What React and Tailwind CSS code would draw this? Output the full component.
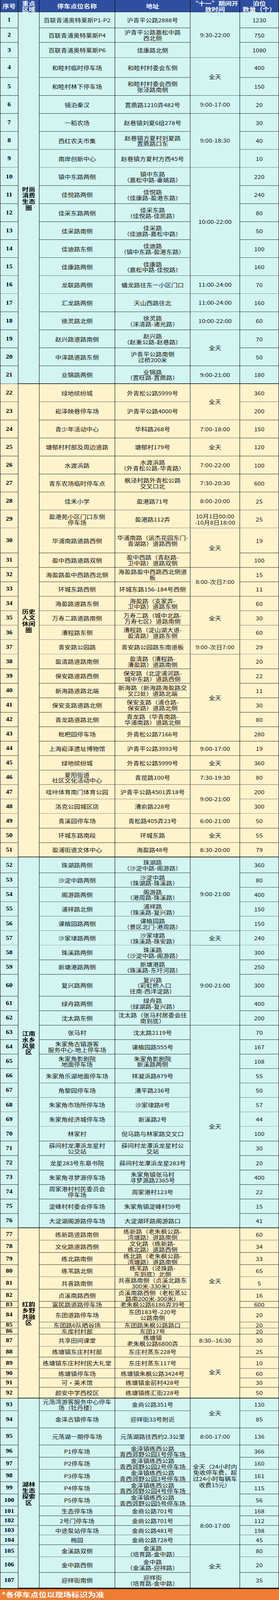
import React from 'react';

const CYAN = 'bg-[#d2f5f2]';
const YELLOW = 'bg-[#fff3cc]';

const groups = [
  {
    label: ['时尚', '消费', '生态', '圈'],
    bg: CYAN,
    rows: [
      [1, '百联青浦奥特莱斯P1-P2', '沪青平公路2888号', '1230', 49],
      [2, '百联青浦奥特莱斯P4', '沪青平公路嘉松中路|西北侧', '750', 45],
      [3, '百联青浦奥特莱斯P6', '佳康路北侧', '1080', 48],
      [4, '和睦村临时停车场', '和睦村村委会东侧', '400', 61],
      [5, '和睦村林下停车场', '和睦村村委会西侧|张泾路南侧', '150', 56],
      [6, '镜泊秦汉', '置鼎路1210弄482号', '20', 56],
      [7, '一稻农场', '赵巷镇刘夏6组278号', '30', 56],
      [8, '西红农夫市集', '赵巷镇方夏村刘夏路|置鼎路口东', '40', 56],
      [9, '南岸创新中心', '赵巷镇方夏村方西45号', '10', 56],
      [10, '镇中东路两侧', '镇中东路|（嘉松中路-垂姚路）', '220', 56],
      [11, '佳悦路两侧', '佳悦路|（佳康路-盈港东路）', '240', 56],
      [12, '佳采东路两侧', '佳采东路|（佳悦路-佳凯路）', '80', 56],
      [13, '佳采路南侧', '佳采路|（佳迪路-嘉松中路）', '50', 56],
      [14, '佳迪路东侧', '佳迪路|（镇中东路-盈港东路）', '100', 56],
      [15, '佳康路两侧', '佳康路|（嘉松中路-佳悦路）', '160', 56],
      [16, '龙联路两侧', '蟠龙路往东一小区门口', '70', 56],
      [17, '汇龙路两侧', '天山西路往北', '160', 56],
      [18, '徐灵路北侧', '徐灵路|（涞清路-诸光路）', '60', 56],
      [19, '赵兴路道路南侧', '赵兴路|（赵重公路-赵巷路）', '70', 56],
      [20, '中泽路道路东侧', '沪青平公路南侧|过桥200米', '50', 56],
      [21, '业锦路两侧', '业锦路|（置旺路-置鼎路）', '180', 56],
    ],
    times: [
      [3, '9:30-22:00'], [2, '全天'], [1, '9:00-17:00'], [3, '9:00-18:30'], [6, '10:00-22:00'],
      [1, '11:00-24:00'], [1, '11:00-24:00'], [1, '10:00-22:00'], [2, '全天'], [1, '9:00-21:00'],
    ],
  },
  {
    label: ['历史', '人文', '休闲', '圈'],
    bg: YELLOW,
    rows: [
      [22, '绿地缤纷城', '外青松公路5999号', '360', 56],
      [23, '崧泽映巷停车场', '沪青平公路4000号', '200', 56],
      [24, '青少年活动中心', '华科路268号', '150', 56],
      [25, '塘郁村村部及周边道路', '塘郁村179号', '120', 56],
      [26, '水渡浜路', '水渡浜路|（外青松公路-华青路）', '100', 56],
      [27, '青东农场临时停车点', '枫泾村路外青松公路|交叉口北', '600', 56],
      [28, '佳禾小学', '盈港路71号', '25', 56],
      [29, '盈港苑小区门口东侧|停车场', '盈港路112弄', '25', 56],
      [30, '华浦南路道路西侧', '华浦南路（运杰花园东门-|青湖路）道路西侧', '19', 77],
      [31, '盈中西路道路双侧', '盈中西路（青赵路-|卫中路）道路双侧', '100', 45],
      [32, '海盈路盈中西路西北侧', '海盈路盈中西路西北侧道|板', '15', 45],
      [33, '环城东路西侧', '环城东路156-184号西侧', '11', 45],
      [34, '海盈路道路东侧', '海盈路（支家弄-|卫中路）道路东侧', '60', 45],
      [35, '万寿二路道路南侧', '万寿二路（城中北路-|万寿七区）道路南侧', '30', 45],
      [36, '漕程路东侧', '漕程路（淀山湖大道-|盈清路）道路东侧', '60', 45],
      [37, '青安路公园路', '青安路公园路东南道板', '29', 45],
      [38, '盈清路道路南侧', '盈清路（漕程路-|漕盈路）道路南侧', '20', 45],
      [39, '保安路道路西侧', '保安路（北淀浦河路-|城中东路）道路西侧', '22', 45],
      [40, '新海路道路北端', '新海路（新海路海盈路交|叉口处）道路北端', '11', 45],
      [41, '保安支路道路北侧', '保安支路（浦仓路-|保安路）道路北侧', '30', 45],
      [42, '青龙路道路北侧', '青龙路（华青南路-|华浦南路）道路北侧', '80', 45],
      [43, '枇杷园停车场', '外青松公路7166号', '280', 45],
      [44, '上海崧泽遗址博物馆', '沪青平公路3993号', '19', 45],
      [45, '绿地缤纷城', '外青松公路5999号', '360', 45],
      [46, '夏阳街道|社区文化活动中心', '青昆路100号', '80', 45],
      [47, '哇咔体育南门体育公园', '沪青平公路4501弄18号', '200', 45],
      [48, '洛克公园城区店', '漕俞路228号', '300', 45],
      [49, '青溪园停车场', '青松路405弄23号', '50', 45],
      [50, '环城东路南段', '环城东路', '55', 45],
      [51, '盈浦街道文体中心', '海盈路48号', '79', 45],
    ],
    times: [
      [2, '全天'], [1, '7:00-18:00'], [1, '全天'], [1, '7:00-22:00'], [1, '7:30-20:30'], [1, '8:00-20:00'],
      [1, '10月1日00:00|-10月8日18:00'], [2, '全天'], [2, '8:00-次日7:00'], [3, '全天'], [1, '9:00-次日7:00'],
      [6, '全天'], [1, '9:00-17:00'], [1, '全天'], [1, '7:30-19:30'], [2, '9:00-21:00'], [1, '6:00-21:00'],
      [1, '全天'], [1, '8:30-20:00'],
    ],
  },
  {
    label: ['江南', '水乡', '风景', '区'],
    bg: CYAN,
    rows: [
      [52, '珠湖路两侧', '珠湖路|（沙淀中路-阁游路）', '360', 49],
      [53, '沙淀中路两侧', '沙淀中路|（珠湖路-珠溪路）', '80', 45],
      [54, '阁游路两侧', '阁游路|（港周路-珠溪路）', '400', 45],
      [55, '浦祥路北侧', '浦祥路|（珠溪路-复兴路）', '150', 45],
      [56, '课植园路两侧', '课植园路|（景区北门-港周路）', '150', 45],
      [57, '沙家埭路两侧', '沙家埭路|（珠溪路-珠安路）', '240', 45],
      [58, '珠溪路两侧', '珠溪路|（沙淀中路-阁游路）', '300', 45],
      [59, '新塘港路两侧', '新塘港路|（珠溪路-东圩河路）', '250', 45],
      [60, '复兴路两侧', '复兴路|（彩虹桥入口|往南-西洋淀路）', '300', 68],
      [61, '绿舟路两侧', '绿舟路|（绿湖路-复兴路）', '400', 45],
      [62, '沈太路东侧', '沈太路（张马村居委会往|南到底）', '200', 45],
      [63, '张马村', '沈太路2119号', '70', 45],
      [64, '朱家角古镇游客|服务中心-地上停车场', '课植园路555号', '167', 45],
      [65, '朱家角影剧院|地面停车场', '朱家角影剧院|新溪路两侧', '108', 45],
      [66, '朱家角乐湖地面停车场', '祥凝浜路879号', '55', 45],
      [67, '角黎园停车场', '漕平路236号', '50', 45],
      [68, '朱家角市场所停车场', '沙家埭路8号', '57', 45],
      [69, '朱家角经济城停车场', '新溪路2号', '44', 45],
      [70, '林家村', '倪马路与林家路交叉口', '100', 45],
      [71, '薛间村龙潭浜龙星村|公交站', '薛间村龙潭浜龙星村公|交站', '30', 45],
      [72, '龙星283号东皋书院', '薛间村龙潭浜龙星283号', '20', 45],
      [73, '朱家角寻梦源停车场', '朱家角镇张马村|寻梦源路2365号', '400', 45],
      [74, '周家港村村民委员会|停车场', '周家港村123号', '22', 45],
      [75, '淀峰村村委会停车场', '朱家角镇淀峰村59号', '15', 45],
      [76, '大淀湖阁游路停车场', '大淀湖环路阁游路口', '41', 45],
    ],
    times: [[5, '9:00-21:00'], [1, '全天'], [5, '9:00-21:00'], [14, '全天']],
  },
  {
    label: ['红韵', '乡野', '共融', '区'],
    bg: YELLOW,
    rows: [
      [77, '练新路道路南侧', '练新路（老朱枫公路-|湾塘路）道路南侧', '60', 38],
      [78, '文化路道路西侧', '文化路（练新路-|练北路）道路西侧', '34', 38],
      [79, '练北路南侧', '练北路（老朱枫公路-|湾塘路）道路南侧', '33', 38],
      [80, '练苇路北侧', '练苇路（泾珠路-|东到底）北侧', '65', 38],
      [81, '共喜路南侧', '共喜路南侧（贞溪北路东|300米-330米）', '5', 38],
      [82, '贞溪南路西侧', '贞溪南路西侧（老松蒸公|路南200米-300米）', '16', 38],
      [83, '富民路道路停车场', '老朱枫公路6186弄39号', '600', 19],
      [84, '东团道路停车场', '东团183号-220号|公路南侧', '20', 45],
      [85, '东团路6队晒谷场', '东团路朱枫公路路口', '20', 19],
      [86, '东库村村部', '东团17号', '20', 19],
      [87, '共享田间课堂', '练塘镇|老朱枫公路6800弄', '30', 38],
      [88, '练塘镇东庄村村部', '东庄村蒸东228号', '25', 33],
      [89, '练塘镇东庄村村民大礼堂', '东庄村蒸东117号', '10', 36],
      [90, '练塘镇停车场', '练塘镇朱枫公路3424号', '60', 29],
      [91, '可•美术馆', '练塘镇金前村428号', '30', 29],
      [92, '颜安中学西校区', '练塘镇练汇街228号', '50', 34],
    ],
    times: [[10, '全天'], [1, '8:30--16:30'], [5, '全天']],
  },
  {
    label: ['湖林', '生态', '探索', '区'],
    bg: CYAN,
    rows: [
      [93, '元荡湾游客服务中心停车|场（牡丹楼）', '金商公路351号', '130', 39],
      [94, '金泽古镇停车场', '迎祥街33号附近', '85', 53],
      [95, '元荡湖一期停车场', '元荡湖路往西约2.3公里', '136', 53],
      [96, 'P1停车场', '金泽镇练西公路|青西郊野公园1号停车场', '366', 38],
      [97, 'P2停车场', '金泽镇练西公路|青西郊野公园2号停车场', '160', 38],
      [98, 'P3停车场', '金泽镇练西公路|青西郊野公园3号停车场', '161', 38],
      [99, 'P4停车场', '金泽镇练西公路|青西郊野公园4号停车场', '115', 38],
      [100, 'P5停车场', '金泽镇练西公路|青西郊野公园5号停车场', '56', 38],
      [101, '生态停车场', '金商公路701号', '168', 30],
      [102, '2号门停车场', '金商公路701号', '112', 30],
      [103, '中途泵站停车场', '金商公路481号', '198', 30],
      [104, '梅园', '金商公路728号', '45', 30],
      [105, '金溪路双侧', '金溪路|（培育路-金中路）', '80', 38],
      [106, '金中路西侧', '金中路|（金溪路-迎祥路）', '20', 48],
      [107, '迎祥街南侧', '迎祥街|（培育路-金中路）', '35', 49],
    ],
    times: [
      [2, '全天'], [1, '8:00-17:00'],
      [5, '全天（24小时内|免收停车费，超|过24小时每辆车|收费15元）'],
      [4, '8:00-17:00'], [3, '全天'],
    ],
  },
];

const allRows = groups.flatMap((g) => g.rows);
const rowTemplate = ['38px', ...allRows.map((r) => `${r[4]}px`), '36px'].join(' ');
const footerRow = allRows.length + 2;

function Lines({ text }) {
  return text.split('|').map((l, i) => (
    <span key={i} className="block whitespace-nowrap">{l}</span>
  ));
}

function buildCells() {
  const cells = [];
  let idx = 0;
  groups.forEach((g, gi) => {
    const start = idx + 2;
    const n = g.rows.length;
    cells.push(
      <div
        key={`reg${gi}`}
        style={{ gridRow: `${start} / span ${n}` }}
        className={`col-start-2 ${g.bg} border-r border-b-2 border-black flex flex-col items-center justify-center font-bold text-[17px] leading-[19px] text-black`}
      >
        <Lines text={g.label.join('|')} />
      </div>
    );
    g.rows.forEach((r, i) => {
      const row = start + i;
      const bb = i === n - 1 ? 'border-b-2' : 'border-b';
      cells.push(
        <div
          key={`s${r[0]}`}
          style={{ gridRow: `${row}` }}
          className={`col-start-1 ${g.bg} border-l border-r border-b border-black flex items-center justify-center font-['Liberation_Serif',serif] font-bold text-[17px] text-black`}
        >
          {r[0]}
        </div>
      );
      cells.push(
        <div
          key={`n${r[0]}`}
          style={{ gridRow: `${row}` }}
          className={`col-start-3 ${g.bg} border-r ${bb} border-black flex flex-col items-center justify-center text-center overflow-hidden`}
        >
          <Lines text={r[1]} />
        </div>
      );
      cells.push(
        <div
          key={`a${r[0]}`}
          style={{ gridRow: `${row}` }}
          className={`col-start-4 ${g.bg} border-r ${bb} border-black flex flex-col items-center justify-center text-center overflow-hidden`}
        >
          <Lines text={r[2]} />
        </div>
      );
      cells.push(
        <div
          key={`c${r[0]}`}
          style={{ gridRow: `${row}` }}
          className={`col-start-6 ${g.bg} border-r ${bb} border-black flex items-center justify-center overflow-hidden`}
        >
          {r[3]}
        </div>
      );
    });
    let t = 0;
    g.times.forEach(([k, text], ti) => {
      const last = t + k === n;
      cells.push(
        <div
          key={`t${gi}-${ti}`}
          style={{ gridRow: `${start + t} / span ${k}` }}
          className={`col-start-5 ${g.bg} border-r ${last ? 'border-b-2' : 'border-b'} border-black flex flex-col items-center justify-center text-center overflow-hidden leading-[19px]`}
        >
          <Lines text={text} />
        </div>
      );
      t += k;
    });
    idx += n;
  });
  return cells;
}

export default function App() {
  return (
    <div className="w-[715px] h-[4096px] overflow-hidden">
      <div
        style={{ gridTemplateRows: rowTemplate }}
        className="grid origin-top scale-y-[0.82414] w-[715px] grid-cols-[47px_54px_194px_193px_127px_100px] font-['Noto_Sans_CJK_SC','Noto_Sans',sans-serif] text-[16px] leading-[18px] text-[#111]"
      >
        <div className="col-start-1 row-start-1 bg-[#2e4f9f] text-white font-bold text-[17px] border-l border-r border-b border-black flex items-center justify-center">
          序号
        </div>
        <div className="col-start-2 row-start-1 bg-[#2e4f9f] text-white font-bold text-[17px] border-r border-b border-black flex flex-col items-center justify-center">
          <span>重点</span>
          <span>区域</span>
        </div>
        <div className="col-start-3 row-start-1 bg-[#2e4f9f] text-white font-bold text-[17px] border-r border-b border-black flex items-center justify-center">
          停车点位名称
        </div>
        <div className="col-start-4 row-start-1 bg-[#2e4f9f] text-white font-bold text-[17px] border-r border-b border-black flex items-center justify-center">
          地址
        </div>
        <div className="col-start-5 row-start-1 bg-[#2e4f9f] text-white font-bold text-[17px] border-r border-b border-black flex flex-col items-center justify-center whitespace-nowrap">
          <span>“十一”期间开</span>
          <span>放时间</span>
        </div>
        <div className="col-start-6 row-start-1 bg-[#2e4f9f] text-white font-bold text-[17px] border-r border-b border-black flex flex-col items-center justify-center whitespace-nowrap">
          <span>泊位</span>
          <span>数量（个）</span>
        </div>
        {buildCells()}
        <div
          style={{ gridRow: `${footerRow}` }}
          className="col-span-6 col-start-1 bg-[#ee7d31] border-t-2 border-black flex items-center pl-1 text-white font-bold text-[21px] leading-[24px]"
        >
          *各停车点位以现场标识为准
        </div>
      </div>
    </div>
  );
}
